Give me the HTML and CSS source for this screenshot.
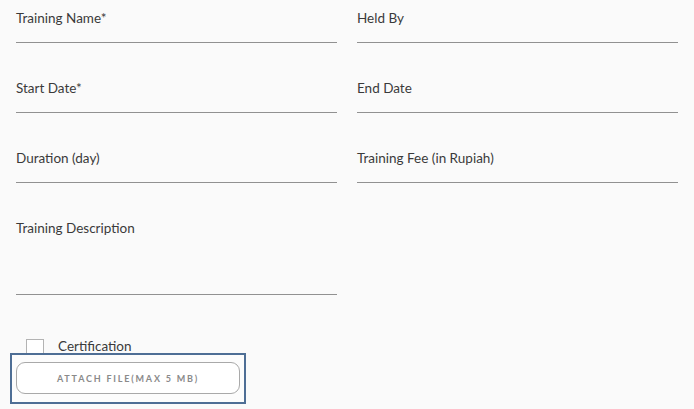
FILE: index.html
```html
<!DOCTYPE html>
<html>
<head>
  <title>Training</title>
  <meta content="width=device-width, initial-scale=1" name="viewport" />
  <link rel="stylesheet" href="styles.css">
</head>
<body>
  <form class="trainingForm">
    <div class="grid">
      <div class="field">
        <label for="trainingName">Training Name*</label>
        <input type="text" id="trainingName">
      </div>
      <div class="field">
        <label for="heldBy">Held By</label>
        <input type="text" id="heldBy">
      </div>
      <div class="field">
        <label for="startDate">Start Date*</label>
        <input type="text" id="startDate">
      </div>
      <div class="field">
        <label for="endDate">End Date</label>
        <input type="text" id="endDate">
      </div>
      <div class="field">
        <label for="duration">Duration (day)</label>
        <input type="text" id="duration">
      </div>
      <div class="field">
        <label for="fee">Training Fee (in Rupiah)</label>
        <input type="text" id="fee">
      </div>
      <div class="field">
        <label for="description">Training Description</label>
        <textarea id="description"></textarea>
      </div>
    </div>

    <div class="checkRow">
      <span class="checkBox"></span>
      <span class="checkLabel">Certification</span>
    </div>

    <div class="attachBox">
      <button type="button" class="attachButton">ATTACH FILE(MAX 5 MB)</button>
    </div>
  </form>
</body>
</html>
```

FILE: styles.css
```css
body {
  margin: 0;
  background: #fafafa;
  font-family: Lato, "Open Sans", sans-serif;
  color: #3a3a3a;
}
.trainingForm {
  padding: 9px 16px 0 16px;
}
.grid {
  display: grid;
  grid-template-columns: 1fr 1fr;
  column-gap: 20px;
  row-gap: 36px;
}
.field {
  display: flex;
  flex-direction: column;
}
.field label {
  font-size: 13.5px;
  line-height: 18px;
  height: 18px;
}
.field input, .field textarea {
  border: none;
  border-bottom: 1px solid #919191;
  background: transparent;
  padding: 0;
  margin: 0;
  box-sizing: border-box;
  font-family: inherit;
  outline: none;
}
.field input {
  height: 16px;
}
.field textarea {
  height: 58px;
  resize: none;
}
.checkRow {
  display: flex;
  align-items: flex-start;
  height: 14px;
  margin-top: 44px;
  padding-left: 10px;
}
.checkBox {
  width: 16px;
  height: 16px;
  border: 1px solid #b3b3b3;
  background: #fff;
  flex: none;
}
.checkLabel {
  margin-left: 14px;
  font-size: 13.5px;
  line-height: 15px;
}
.attachBox {
  position: relative;
  width: 236px;
  box-sizing: border-box;
  margin-left: -6px;
  border: 2px solid #4e6e95;
  background: #fcfcfc;
  padding: 7px 4px 8px 4px;
}
.attachButton {
  display: block;
  width: 100%;
  height: 32px;
  border: 1px solid #a9a9a9;
  border-radius: 9px;
  background: #fff;
  color: #8a8a8a;
  font-family: Lato, sans-serif;
  font-weight: bold;
  font-size: 9px;
  letter-spacing: 1.8px;
  cursor: pointer;
}
```
